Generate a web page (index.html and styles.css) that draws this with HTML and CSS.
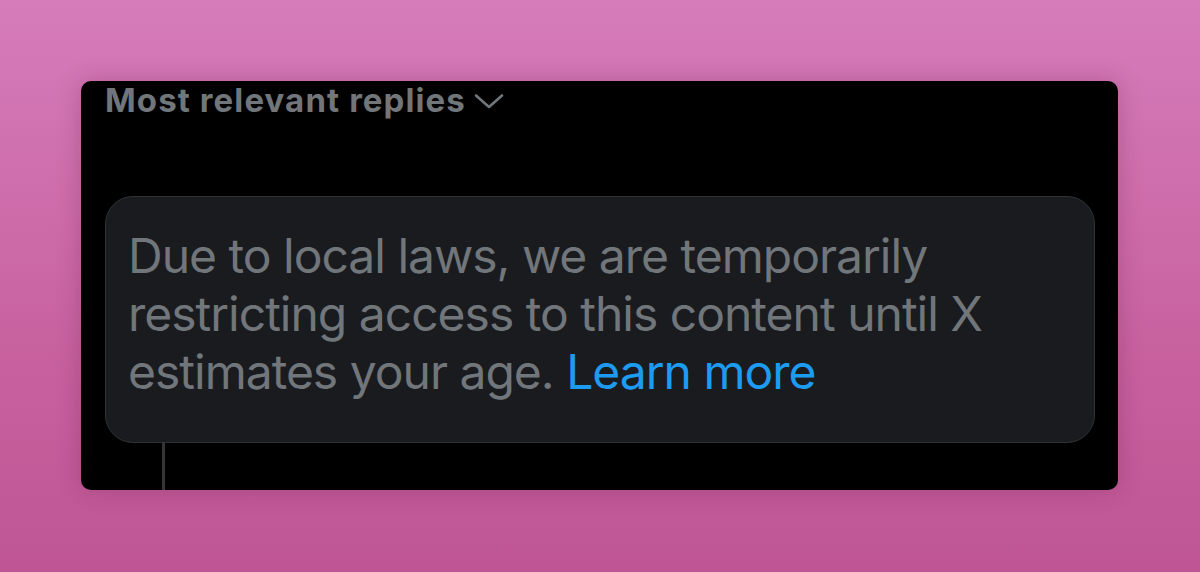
FILE: index.html
```html
<!DOCTYPE html>
<html>
<head>
<meta charset="utf-8">
<link rel="stylesheet" href="styles.css">
</head>
<body>
<div class="card">
  <div class="header">
    <span class="title">Most relevant replies</span>
    <svg class="chev" width="30" height="16" viewBox="0 0 30 16"><path d="M2 2.5 L15 14 L28 2.5" fill="none" stroke="#71767b" stroke-width="2.6" stroke-linecap="round" stroke-linejoin="round"/></svg>
  </div>
  <div class="notice">
    <p>Due to local laws, we are temporarily restricting access to this content until X estimates your age. <a href="#">Learn more</a></p>
  </div>
  <div class="thread"></div>
</div>
</body>
</html>
```
FILE: styles.css
```css
html, body { margin: 0; padding: 0; }
body {
  width: 1200px;
  height: 572px;
  background: linear-gradient(180deg, #d67cbb 0%, #c8629f 60%, #bf5594 100%);
  font-family: Inter, "Noto Sans", sans-serif;
  padding: 81px 0 0 81px;
  box-sizing: border-box;
  overflow: hidden;
}
.card {
  width: 1037px;
  height: 409px;
  background: #000;
  border-radius: 10px;
  box-shadow: 0 0 24px rgba(80, 20, 60, 0.25);
  padding: 0 23px 0 24px;
  box-sizing: border-box;
  display: flex;
  flex-direction: column;
}
.header {
  display: flex;
  align-items: center;
  gap: 8px;
  height: 38px;
  padding-left: 0;
}
.title {
  color: #71767b;
  font-weight: 700;
  font-size: 33px;
  line-height: 38px;
  letter-spacing: 1.1px;
}
.chev { margin-top: 2px; }
.notice {
  margin-top: 77px;
  height: 247px;
  background: #1a1b1f;
  border: 1px solid #2f3336;
  border-radius: 28px;
  box-sizing: border-box;
  padding: 30px 20px 0 22px;
}
.notice p {
  margin: 0;
  color: #71767b;
  font-size: 48px;
  line-height: 58px;
  letter-spacing: -1px;
  font-weight: 400;
}
.notice a { color: #1d9bf0; text-decoration: none; }
.thread {
  width: 3px;
  flex: 1;
  background: #333639;
  margin-left: 57px;
}
```
